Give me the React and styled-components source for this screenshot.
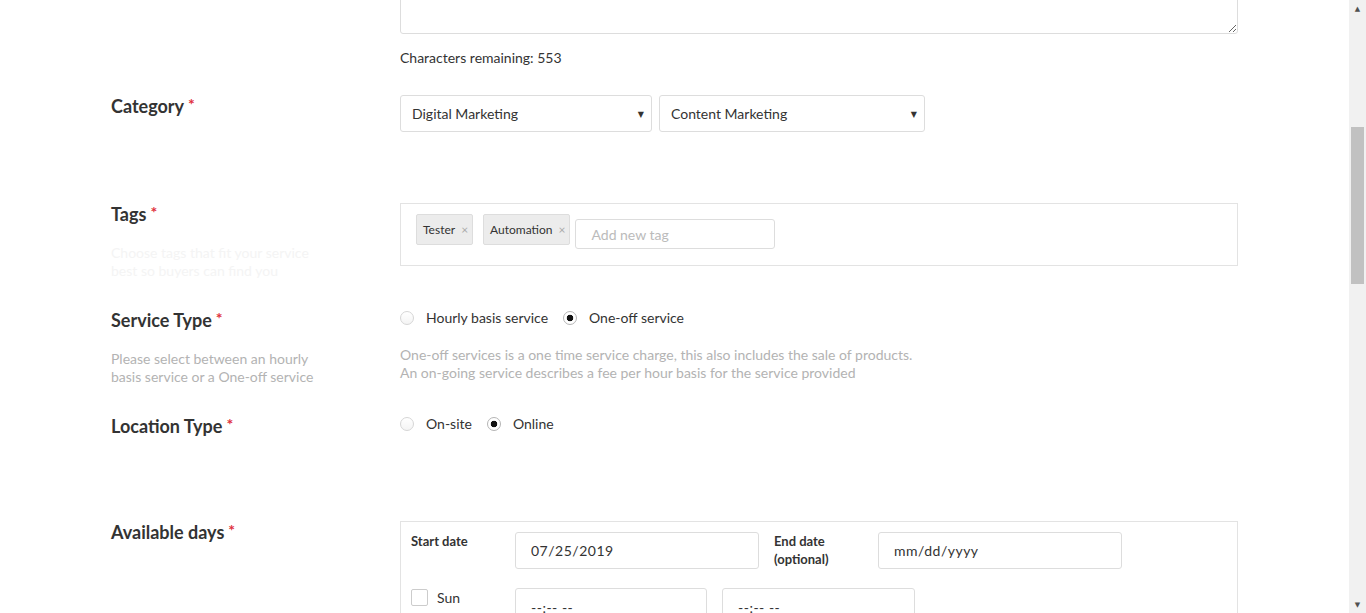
import React, { useLayoutEffect, useRef } from "react";
import styled, { createGlobalStyle } from "styled-components";

const GlobalStyle = createGlobalStyle`
  html, body { margin: 0; padding: 0; background: #fff; overflow: hidden; }
  body {
    font-family: Lato, "Open Sans", "Liberation Sans", sans-serif;
    color: #333;
    -webkit-font-smoothing: antialiased;
  }
  * { box-sizing: border-box; }
`;

const Viewport = styled.div`
  display: flex;
  height: 100vh;
  width: 100vw;
`;

const Scroller = styled.div`
  flex: 1;
  height: 100%;
  overflow: hidden;
`;

const ScrollBar = styled.div`
  width: 17px;
  flex: none;
  display: flex;
  flex-direction: column;
  background: #f1f1f1;
`;

const Arrow = styled.div`
  height: 17px;
  display: flex;
  align-items: center;
  justify-content: center;
  font-family: "DejaVu Sans", sans-serif;
  font-size: 7px;
  color: #505050;
`;

const Track = styled.div`
  flex: 1;
  padding: 0 2px;
`;

const Thumb = styled.div`
  margin-top: ${(p) => p.$top}px;
  height: ${(p) => p.$h}px;
  background: #c1c1c1;
`;

const Page = styled.div`
  width: 1127px;
  margin: 0 auto;
  padding: 50px 0 60px;
`;

const Header = styled.header`
  margin-bottom: 46px;
`;

const Title = styled.h1`
  margin: 0;
  font-size: 28px;
  line-height: 34px;
  font-weight: 700;
  color: #222;
`;

const Subtitle = styled.p`
  margin: 6px 0 0;
  font-size: 14px;
  line-height: 20px;
  color: #999;
`;

const Row = styled.section`
  display: grid;
  grid-template-columns: 289px 838px;
  min-height: ${(p) => p.$minH || 90}px;
  margin-bottom: 16px;
`;

const LabelCol = styled.div`
  display: flex;
  flex-direction: column;
`;

const Label = styled.div`
  font-size: 18px;
  line-height: 22px;
  font-weight: 700;
  color: #333;
`;

const Req = styled.span`
  color: #e0303c;
  font-size: 16px;
  margin-left: 4px;
  vertical-align: top;
  line-height: 18px;
`;

const Hint = styled.div`
  margin-top: 19px;
  max-width: 215px;
  font-size: 14px;
  line-height: 18px;
  color: ${(p) => (p.$faint ? "#f4f4f4" : "#b3b3b3")};
`;

const Control = styled.div`
  display: flex;
  flex-direction: column;
`;

const TextInput = styled.input`
  height: ${(p) => p.$h || 38}px;
  width: ${(p) => (p.$w ? `${p.$w}px` : "100%")};
  border: 1px solid #ddd;
  border-radius: 3px;
  padding: 0 15px;
  font-family: Lato, "Liberation Sans", sans-serif;
  font-size: 14px;
  color: #333;
  letter-spacing: ${(p) => (p.$spaced ? "0.5px" : "0")};
  background: #fff;
  outline: none;
  &::placeholder { color: #bbb; }
`;

const TextArea = styled.textarea`
  display: block;
  width: 100%;
  height: 200px;
  border: 1px solid #ddd;
  border-radius: 3px;
  padding: 12px 15px;
  font-family: Lato, "Liberation Sans", sans-serif;
  font-size: 14px;
  color: #333;
  outline: none;
`;

const Counter = styled.div`
  margin-top: 14px;
  margin-bottom: 11px;
  font-size: 14px;
  line-height: 20px;
  color: #333;
`;

const SelectRow = styled.div`
  display: flex;
  gap: 7px;
`;

const SelectWrap = styled.div`
  position: relative;
  width: ${(p) => p.$w}px;
`;

const Select = styled.select`
  width: 100%;
  height: 37px;
  border: 1px solid #ddd;
  border-radius: 3px;
  padding: 0 24px 0 11px;
  font-family: Lato, "Liberation Sans", sans-serif;
  font-size: 14px;
  color: #333;
  background: #fff;
  appearance: none;
  -webkit-appearance: none;
  outline: none;
`;

const Caret = styled.span`
  position: absolute;
  right: 8px;
  top: 50%;
  transform: translateY(-50%);
  font-size: 8px;
  color: #333;
  pointer-events: none;
  font-family: "DejaVu Sans", sans-serif;
`;

const TagBox = styled.div`
  display: flex;
  align-items: flex-start;
  border: 1px solid #e3e3e3;
  padding: 10px 15px 16px;
`;

const Chip = styled.span`
  display: inline-flex;
  align-items: center;
  height: 31px;
  padding: 0 4px 0 6px;
  margin-right: 10px;
  background: #ececec;
  border: 1px solid #ddd;
  border-radius: 2px;
  font-size: 12px;
  color: #333;
`;

const ChipX = styled.span`
  margin-left: 6px;
  font-size: 12px;
  color: #aaa;
`;

const TagInput = styled(TextInput)`
  height: 30px;
  width: 200px;
  margin-left: -5px;
  margin-top: 5px;
`;

const RadioGroup = styled.div`
  display: flex;
  align-items: center;
  height: 18px;
`;

const RadioOption = styled.label`
  display: inline-flex;
  align-items: center;
  gap: 12px;
  margin-right: 15px;
  font-size: 14px;
  line-height: 18px;
  color: #333;
`;

const Radio = styled.span`
  width: 14px;
  height: 14px;
  border-radius: 50%;
  border: 1px solid ${(p) => (p.$on ? "#b5b5b5" : "#d6d6d6")};
  background: ${(p) =>
    p.$on
      ? "radial-gradient(circle, #111 0 3px, #fff 3.6px)"
      : "linear-gradient(#fff, #f4f4f4)"};
  flex: none;
`;

const Help = styled.div`
  margin-top: 19px;
  font-size: 14px;
  line-height: 18px;
  color: #b3b3b3;
`;

const DaysBox = styled.div`
  border: 1px solid #e3e3e3;
  padding: 10px 10px 14px;
`;

const DateRow = styled.div`
  display: grid;
  grid-template-columns: 104px 244px 119px 244px;
  margin-bottom: 19px;
`;

const SmallLabel = styled.div`
  padding-left: ${(p) => (p.$indent ? 15 : 0)}px;
  font-size: 13px;
  line-height: 18px;
  font-weight: 700;
  color: #333;
`;

const DayRow = styled.div`
  display: grid;
  grid-template-columns: 104px auto;
  margin-bottom: 18px;
`;

const TimePair = styled.div`
  display: flex;
  gap: 15px;
`;

const DayName = styled.label`
  display: flex;
  align-items: flex-start;
  gap: 9px;
  padding-top: 1px;
  font-size: 14px;
  line-height: 18px;
  color: #333;
`;

const Check = styled.span`
  width: 17px;
  height: 17px;
  border: 1px solid #ccc;
  border-radius: 2px;
  background: #fff;
  flex: none;
`;

const DropZone = styled.div`
  height: 220px;
  border: 1px dashed #ccc;
  display: flex;
  align-items: center;
  justify-content: center;
  font-size: 14px;
  color: #aaa;
`;

const Actions = styled.div`
  display: flex;
  justify-content: flex-end;
  gap: 12px;
  padding: 30px 0 60px;
  border-top: 1px solid #eee;
`;

const Button = styled.button`
  height: 42px;
  padding: 0 28px;
  border-radius: 3px;
  border: 1px solid ${(p) => (p.$primary ? "#2a8fd6" : "#ddd")};
  background: ${(p) => (p.$primary ? "#2a8fd6" : "#fff")};
  color: ${(p) => (p.$primary ? "#fff" : "#333")};
  font-family: Lato, "Liberation Sans", sans-serif;
  font-size: 14px;
  font-weight: 700;
`;

const days = ["Sun", "Mon", "Tue", "Wed", "Thu", "Fri", "Sat"];

function Field({ label, hint, faint, minH, children }) {
  return (
    <Row $minH={minH}>
      <LabelCol>
        <Label>
          {label}
          <Req>*</Req>
        </Label>
        {hint && <Hint $faint={faint}>{hint}</Hint>}
      </LabelCol>
      <Control>{children}</Control>
    </Row>
  );
}

export default function App() {
  const areaRef = useRef(null);
  const scrollRef = useRef(null);

  useLayoutEffect(() => {
    const place = () => {
      const sc = scrollRef.current;
      const ta = areaRef.current;
      if (!sc || !ta) return;
      const r = ta.getBoundingClientRect();
      const s = sc.getBoundingClientRect();
      sc.scrollTop = sc.scrollTop + (r.bottom - s.top) - 34;
    };
    place();
    if (document.fonts && document.fonts.ready) document.fonts.ready.then(place);
  }, []);

  return (
    <>
      <GlobalStyle />
      <Viewport>
        <Scroller ref={scrollRef}>
          <Page>
            <Header>
              <Title>Create a new service</Title>
              <Subtitle>Tell buyers what you offer and when you are available</Subtitle>
            </Header>

            <Field label="Service title" hint="A short, clear name for your service">
              <TextInput defaultValue="Automation testing for web apps" />
            </Field>

            <Row $minH={0}>
              <LabelCol>
                <Label>
                  Description<Req>*</Req>
                </Label>
                <Hint>Describe what is included in your service</Hint>
              </LabelCol>
              <Control>
                <TextArea ref={areaRef} defaultValue="" />
                <Counter>Characters remaining: 553</Counter>
              </Control>
            </Row>

            <Field label="Category" minH={92}>
              <SelectRow>
                <SelectWrap $w={252}>
                  <Select defaultValue="dm">
                    <option value="dm">Digital Marketing</option>
                  </Select>
                  <Caret>▼</Caret>
                </SelectWrap>
                <SelectWrap $w={266}>
                  <Select defaultValue="cm">
                    <option value="cm">Content Marketing</option>
                  </Select>
                  <Caret>▼</Caret>
                </SelectWrap>
              </SelectRow>
            </Field>

            <Field
              label="Tags"
              faint
              hint="Choose tags that fit your service best so buyers can find you"
            >
              <TagBox>
                <Chip>
                  Tester<ChipX>×</ChipX>
                </Chip>
                <Chip>
                  Automation<ChipX>×</ChipX>
                </Chip>
                <TagInput placeholder="Add new tag" />
              </TagBox>
            </Field>

            <Field
              label="Service Type"
              hint="Please select between an hourly basis service or a One-off service"
            >
              <RadioGroup>
                <RadioOption>
                  <Radio />
                  Hourly basis service
                </RadioOption>
                <RadioOption>
                  <Radio $on />
                  One-off service
                </RadioOption>
              </RadioGroup>
              <Help>
                One-off services is a one time service charge, this also includes the sale of products.
                <br />
                An on-going service describes a fee per hour basis for the service provided
              </Help>
            </Field>

            <Field label="Location Type">
              <RadioGroup>
                <RadioOption>
                  <Radio />
                  On-site
                </RadioOption>
                <RadioOption>
                  <Radio $on />
                  Online
                </RadioOption>
              </RadioGroup>
            </Field>

            <Field label="Available days">
              <DaysBox>
                <DateRow>
                  <SmallLabel>Start date</SmallLabel>
                  <TextInput $h={37} $spaced defaultValue="07/25/2019" />
                  <SmallLabel $indent>
                    End date
                    <br />
                    (optional)
                  </SmallLabel>
                  <TextInput $h={37} $spaced defaultValue="mm/dd/yyyy" />
                </DateRow>
                {days.map((d) => (
                  <DayRow key={d}>
                    <DayName>
                      <Check />
                      {d}
                    </DayName>
                    <TimePair>
                      <TextInput $w={192} $spaced defaultValue="--:-- --" />
                      <TextInput $w={193} $spaced defaultValue="--:-- --" />
                    </TimePair>
                  </DayRow>
                ))}
              </DaysBox>
            </Field>

            <Field label="Price" hint="Set the price of your service">
              <TextInput $w={252} placeholder="0.00" />
            </Field>

            <Field label="Photos" hint="Upload up to 5 photos of your service">
              <DropZone>Drop images here or click to upload</DropZone>
            </Field>

            <Actions>
              <Button>Cancel</Button>
              <Button $primary>Publish service</Button>
            </Actions>
          </Page>
        </Scroller>
        <ScrollBar aria-hidden="true">
          <Arrow>▲</Arrow>
          <Track>
            <Thumb $top={110} $h={157} />
          </Track>
          <Arrow>▼</Arrow>
        </ScrollBar>
      </Viewport>
    </>
  );
}
